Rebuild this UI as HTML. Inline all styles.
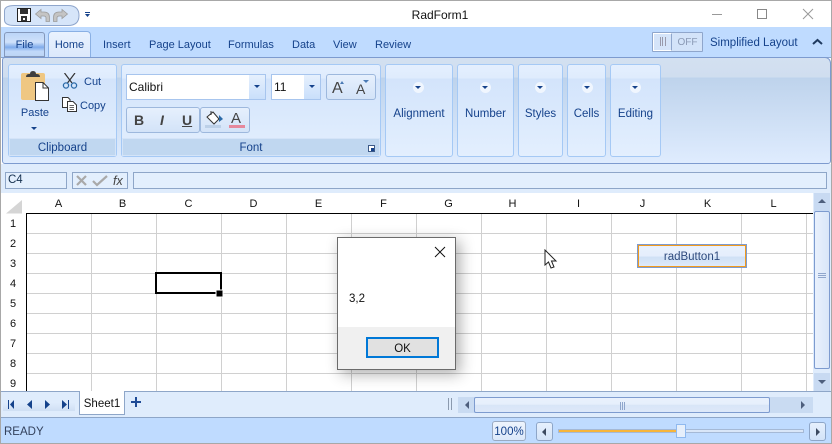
<!DOCTYPE html>
<html><head><meta charset="utf-8"><style>
html,body{margin:0;padding:0;background:#fff}
#r{position:relative;width:832px;height:444px;overflow:hidden;background:#fff;font-family:"Liberation Sans",sans-serif;font-size:11.5px;color:#15428b}
#r div{position:absolute;box-sizing:border-box;white-space:nowrap}
.t{line-height:14px}
.c{text-align:center}
.k{color:#111}
.s{font-size:11px}
.grp{border:1px solid #a5c9f5;border-radius:3px;background:linear-gradient(#e4effe 0,#dfecfd 13px,#d3e4fb 14px,#e3effe 100%)}
.gl{background:#c0d7f0;border:1px solid #d4e4f8;color:#15428b;text-align:center;line-height:18px}
.btn{border:1px solid #8fa9d0;border-radius:3px;background:linear-gradient(#e6f0fd,#d3e3f8)}
.ar{width:0;height:0;border-left:3px solid transparent;border-right:3px solid transparent;border-top:3px solid #15428b}
.dot{width:11px;height:11px;border-radius:50%;background:#f0f6fe}
</style></head><body><div id="r">
<!-- window -->
<div style="left:0;top:0;width:832px;height:1px;background:#a8a8a8"></div>
<div style="left:0;top:27px;width:832px;height:30px;background:#bfdbff"></div>
<div style="left:1px;top:57px;width:830px;height:1px;background:#8aa5cf"></div>

<!-- QAT -->
<svg style="position:absolute;left:0;top:0" width="110" height="30">
<path d="M14.5 5.500H68Q79 5.500 79 15.500T68 25.500H14.500Q4.500 25.500 4.500 20V11Q4.500 5.500 14.500 5.500Z" fill="#d6e5f9" stroke="#8fa6cc"/>
<rect x="17.500" y="8.500" width="13" height="13" fill="#fff" stroke="#222"/>
<rect x="20" y="9" width="8" height="5" fill="#333"/><rect x="21" y="16" width="6" height="5" fill="#333"/><rect x="23" y="18" width="2" height="2" fill="#fff"/>
<path d="M35.500 14L41 9.500V12H44Q49.500 12 49.500 17.500V21.500H46V18Q46 16 43.500 16H41V18.500Z" fill="#c4c4c4" stroke="#9c9c9c" stroke-width=".8"/>
<path d="M67.500 14L62 9.500V12H59Q53.500 12 53.500 17.500V21.500H57V18Q57 16 59.500 16H62V18.500Z" fill="#c4c4c4" stroke="#9c9c9c" stroke-width=".8"/>
<rect x="85" y="12" width="5" height="1" fill="#15428b"/><path d="M85 14H90L87.500 17Z" fill="#15428b"/>
</svg>
<div class="t c k" style="left:380px;top:8px;width:120px;font-size:12px">RadForm1</div>
<svg style="position:absolute;left:700px;top:0" width="132" height="27" fill="none">
<path d="M12 14.500H22" stroke="#999"/><rect x="57.500" y="9.500" width="9" height="9" stroke="#888"/><path d="M103 9L113 19M113 9L103 19" stroke="#999"/>
</svg>

<!-- tabs -->
<div style="left:4px;top:32px;width:41px;height:25px;border:1px solid #8498bb;border-radius:3px 3px 0 0;background:linear-gradient(#bcd5f7 0,#cfe1fa 40%,#7fabeb 62%,#c2d9f9 80%,#bcd5f5)"></div>
<div class="t c s" style="left:4px;top:38px;width:41px">File</div>
<div style="left:48px;top:31px;width:43px;height:27px;border:1px solid #8ab0e4;border-bottom:0;border-radius:4px 4px 0 0;background:linear-gradient(#e9f2fe,#dbe8fb)"></div>
<div class="t c s" style="left:48px;top:38px;width:43px">Home</div>
<div class="t s" style="left:103px;top:38px">Insert</div>
<div class="t s" style="left:149px;top:38px">Page Layout</div>
<div class="t s" style="left:228px;top:38px">Formulas</div>
<div class="t s" style="left:292px;top:38px">Data</div>
<div class="t s" style="left:333px;top:38px">View</div>
<div class="t s" style="left:375px;top:38px">Review</div>

<!-- toggle -->
<div style="left:652px;top:32px;width:51px;height:20px;border:1px solid #8fa6cc;background:#d3e3f9;border-radius:1px"></div>
<div style="left:653px;top:33px;width:19px;height:18px;border:1px solid #fff;background:#d5e4f9;border-right:1px solid #8fa6cc"></div>
<div style="left:660px;top:37px;width:6px;height:9px;border-left:1px solid #99a;border-right:1px solid #99a"></div>
<div style="left:662px;top:37px;width:1px;height:9px;background:#99a"></div>
<div class="t c" style="left:672px;top:36px;width:31px;font-size:10px;color:#8b9ab5">OFF</div>
<div class="t" style="left:710px;top:36px;font-size:11.500px">Simplified Layout</div>
<svg style="position:absolute;left:811px;top:38px" width="14" height="10" fill="none"><path d="M2 6L6.500 2L11 6" stroke="#1f3a5f" stroke-width="2"/></svg>

<!-- ribbon body -->
<div style="left:2px;top:57px;width:829px;height:107px;border:1px solid #7d9bcf;border-top:1px solid #7d9bcf;border-radius:3px 6px 3px 3px;background:linear-gradient(#d3e0f1 0,#d0deef 19px,#bed3ec 20px,#dfecfe 100%)"></div>

<!-- Clipboard -->
<div class="grp" style="left:8px;top:64px;width:109px;height:93px"></div>
<div class="gl" style="left:9px;top:138px;width:107px;height:18px">Clipboard</div>
<svg style="position:absolute;left:20px;top:70px" width="32" height="33">
<rect x="1" y="3" width="24" height="27" rx="2" fill="#efc782"/>
<path d="M6 7Q6 4 9 4H10Q10 1 13 1T16 4H17Q20 4 20 7Z" fill="#3f3f3f"/>
<path d="M15.500 12.500H23L28.500 18V30.500H15.500Z" fill="#fff" stroke="#333"/><path d="M23 12.500V18H28.500" fill="none" stroke="#333"/>
</svg>
<div class="t c s" style="left:19px;top:106px;width:32px">Paste</div>
<div class="ar" style="left:31px;top:127px"></div>
<svg style="position:absolute;left:62px;top:73px" width="16" height="17" fill="none" stroke="#333">
<path d="M2.500 0L10 10M13 0L5.500 10" stroke-width="1.200"/><circle cx="4" cy="12.500" r="2.600" stroke="#2b6aa8" stroke-width="1.300"/><circle cx="12" cy="12.500" r="2.600" stroke="#2b6aa8" stroke-width="1.300"/>
</svg>
<div class="t s" style="left:84px;top:75px">Cut</div>
<svg style="position:absolute;left:61px;top:97px" width="17" height="15" fill="#fff" stroke="#333">
<path d="M1.500 .500H7L9 2.500V10.500H1.500Z"/><path d="M6.500 4.500H12L15.500 8V14.500H6.500Z"/><path d="M8.500 8.500H13M8.500 10.500H13M8.500 12.500H13" stroke-width=".8"/>
</svg>
<div class="t s" style="left:80px;top:99px">Copy</div>

<!-- Font -->
<div class="grp" style="left:121px;top:64px;width:260px;height:93px"></div>
<div class="gl" style="left:122px;top:138px;width:258px;height:18px"><span>Font</span></div>
<div style="left:368px;top:145px;width:7px;height:7px;border:1px solid #3d5a88;background:#fff"></div>
<div style="left:371px;top:148px;width:3px;height:3px;background:#15428b"></div>
<div style="left:126px;top:74px;width:140px;height:26px;background:#fff;border:1px solid #a7c5ee"></div>
<div class="t k" style="left:129px;top:80px;font-size:12px">Calibri</div>
<div style="left:249px;top:75px;width:16px;height:24px;background:linear-gradient(#e6f0fd,#c9dffb)"></div>
<div class="ar" style="left:254px;top:85px"></div>
<div style="left:271px;top:74px;width:50px;height:26px;background:#fff;border:1px solid #a7c5ee"></div>
<div class="t k" style="left:274px;top:80px;font-size:12px">11</div>
<div style="left:304px;top:75px;width:16px;height:24px;background:linear-gradient(#e6f0fd,#c9dffb)"></div>
<div class="ar" style="left:309px;top:85px"></div>
<div class="btn" style="left:326px;top:74px;width:50px;height:26px;border-color:#9db8dd"></div>
<div class="t" style="left:332px;top:80px;font-size:16px;line-height:18px;color:#444">A</div>
<div style="left:340px;top:81px;width:0;height:0;border-left:2.500px solid transparent;border-right:2.500px solid transparent;border-bottom:3px solid #4a7ab5"></div>
<div class="t" style="left:356px;top:81px;font-size:14px;line-height:16px;color:#444">A</div>
<div style="left:363px;top:80px;width:0;height:0;border-left:3px solid transparent;border-right:3px solid transparent;border-top:3px solid #4a7ab5"></div>

<div class="btn" style="left:126px;top:107px;width:74px;height:26px;border-color:#9db8dd"></div>
<div class="btn" style="left:200px;top:107px;width:50px;height:26px;border-color:#9db8dd"></div>
<div class="t" style="left:134px;top:113px;font-size:14px;font-weight:bold;color:#444">B</div>
<div class="t" style="left:160px;top:113px;font-size:14px;font-weight:bold;font-style:italic;color:#444">I</div>
<div class="t" style="left:182px;top:113px;font-size:14px;font-weight:bold;text-decoration:underline;color:#444">U</div>
<svg style="position:absolute;left:205px;top:110px" width="18" height="18">
<path d="M2 7L8 2L14 9L9 14Z" fill="#fff" stroke="#333"/><path d="M14 5L18 9L14 12Z" fill="#2b6aa8"/><path d="M6 1V5" stroke="#333"/>
<rect x="0" y="15" width="16" height="3" fill="#bcd0e8"/>
</svg>
<div class="t" style="left:231px;top:112px;font-size:15px;color:#444">A</div>
<div style="left:229px;top:125px;width:16px;height:3px;background:#e6889c"></div>

<!-- collapsed groups -->
<div class="grp" style="left:385px;top:64px;width:68px;height:93px"></div>
<div class="grp" style="left:457px;top:64px;width:57px;height:93px"></div>
<div class="grp" style="left:518px;top:64px;width:45px;height:93px"></div>
<div class="grp" style="left:567px;top:64px;width:39px;height:93px"></div>
<div class="grp" style="left:610px;top:64px;width:51px;height:93px"></div>
<div class="dot" style="left:413px;top:82px"></div>
<div class="dot" style="left:480px;top:82px"></div>
<div class="dot" style="left:535px;top:82px"></div>
<div class="dot" style="left:582px;top:82px"></div>
<div class="dot" style="left:630px;top:82px"></div>
<div class="ar" style="left:415px;top:86px"></div>
<div class="ar" style="left:482px;top:86px"></div>
<div class="ar" style="left:537px;top:86px"></div>
<div class="ar" style="left:584px;top:86px"></div>
<div class="ar" style="left:632px;top:86px"></div>
<div class="t c" style="left:385px;top:107px;width:68px">Alignment</div>
<div class="t c" style="left:457px;top:107px;width:57px">Number</div>
<div class="t c" style="left:518px;top:107px;width:45px">Styles</div>
<div class="t c" style="left:567px;top:107px;width:39px">Cells</div>
<div class="t c" style="left:610px;top:107px;width:51px">Editing</div>

<!-- formula bar -->
<div style="left:0;top:164px;width:832px;height:29px;background:#dfecfc"></div>
<div style="left:5px;top:172px;width:62px;height:17px;border:1px solid #8ea6c8;background:#e3effd;color:#15304f;padding-left:2px;line-height:14px;font-size:11.500px">C4</div>
<div style="left:72px;top:172px;width:56px;height:17px;border:1px solid #8ea6c8;background:#e3effd"></div>
<svg style="position:absolute;left:76px;top:174px" width="50" height="14" fill="none" stroke="#a9a9a9" stroke-width="2.200">
<path d="M1 2L10 11M10 2L1 11"/><path d="M17 7L21 11L31 2"/></svg>
<div class="t" style="left:113px;top:174px;font-size:12.500px;font-style:italic;color:#444">fx</div>
<div style="left:133px;top:172px;width:694px;height:17px;border:1px solid #8ea6c8;background:#e3effd"></div>

<!-- sheet -->
<svg style="position:absolute;left:0;top:193px" width="832" height="198">
<path d="M6 20.500L22 7V20.500Z" fill="#d5d5d5"/>
<g stroke="#d0d0d0">
<path d="M91.500 20V198M156.500 20V198M221.500 20V198M286.500 20V198M351.500 20V198M416.500 20V198M481.500 20V198M546.500 20V198M611.500 20V198M676.500 20V198M741.500 20V198M806.500 20V198"/>
<path d="M27 40.500H813M27 60.500H813M27 80.500H813M27 100.500H813M27 120.500H813M27 140.500H813M27 160.500H813M27 180.500H813"/>
</g>
<path d="M813 20.500H26.500V198" fill="none" stroke="#000"/>
<rect x="156" y="80" width="65" height="20" fill="#fff" stroke="#000" stroke-width="2"/>
<rect x="216" y="97" width="7" height="7" fill="#000" stroke="#fff"/>
</svg>
<div class="t c k" style="left:26px;top:197px;width:65px;font-size:11px">A</div>
<div class="t c k" style="left:90px;top:197px;width:65px;font-size:11px">B</div>
<div class="t c k" style="left:156px;top:197px;width:65px;font-size:11px">C</div>
<div class="t c k" style="left:221px;top:197px;width:65px;font-size:11px">D</div>
<div class="t c k" style="left:286px;top:197px;width:65px;font-size:11px">E</div>
<div class="t c k" style="left:351px;top:197px;width:65px;font-size:11px">F</div>
<div class="t c k" style="left:416px;top:197px;width:65px;font-size:11px">G</div>
<div class="t c k" style="left:480px;top:197px;width:65px;font-size:11px">H</div>
<div class="t c k" style="left:546px;top:197px;width:65px;font-size:11px">I</div>
<div class="t c k" style="left:610px;top:197px;width:65px;font-size:11px">J</div>
<div class="t c k" style="left:675px;top:197px;width:65px;font-size:11px">K</div>
<div class="t c k" style="left:741px;top:197px;width:65px;font-size:11px">L</div>
<div class="t c k" style="left:3px;top:217px;width:20px;font-size:11px">1</div>
<div class="t c k" style="left:3px;top:237px;width:20px;font-size:11px">2</div>
<div class="t c k" style="left:3px;top:257px;width:20px;font-size:11px">3</div>
<div class="t c k" style="left:3px;top:277px;width:20px;font-size:11px">4</div>
<div class="t c k" style="left:3px;top:297px;width:20px;font-size:11px">5</div>
<div class="t c k" style="left:3px;top:317px;width:20px;font-size:11px">6</div>
<div class="t c k" style="left:3px;top:337px;width:20px;font-size:11px">7</div>
<div class="t c k" style="left:3px;top:357px;width:20px;font-size:11px">8</div>
<div class="t c k" style="left:3px;top:377px;width:20px;font-size:11px">9</div>

<!-- radButton -->
<div style="left:637px;top:244px;width:110px;height:24px;border:1px solid #7d9bcf;background:linear-gradient(#e9f1fd 0,#e5eefc 50%,#cfe0f5 55%,#e0ebfa 100%);box-shadow:inset 0 0 0 1px #f29b1d"></div>
<div class="t c" style="left:637px;top:250px;width:110px;font-size:11.500px;color:#2e4a7d">radButton1</div>

<!-- cursor -->
<svg style="position:absolute;left:544px;top:249px" width="14" height="22"><path d="M1 1V16L4.500 13L7 19L10 18L7.500 12H12Z" fill="#fff" stroke="#222"/></svg>

<!-- scrollbar vert -->
<div style="left:813px;top:193px;width:18px;height:198px;background:#dfecfc"></div>
<div style="left:814px;top:193px;width:16px;height:18px;background:#c8daf2"></div>
<div style="left:818px;top:199px;width:0;height:0;border-left:4px solid transparent;border-right:4px solid transparent;border-bottom:4px solid #4e5f7d"></div>
<div style="left:814px;top:211px;width:16px;height:158px;border:1px solid #7d9bcf;border-radius:2px;background:linear-gradient(90deg,#e9f1fd,#d9e6f8)"></div>
<div style="left:818px;top:273px;width:8px;height:5px;border-top:1px solid #8fa6cc;border-bottom:1px solid #8fa6cc"></div>
<div style="left:818px;top:275px;width:8px;height:1px;background:#8fa6cc"></div>
<div style="left:814px;top:373px;width:16px;height:18px;background:#c8daf2"></div>
<div style="left:818px;top:380px;width:0;height:0;border-left:4px solid transparent;border-right:4px solid transparent;border-top:4px solid #4e5f7d"></div>

<!-- dialog -->
<div style="left:337px;top:237px;width:119px;height:133px;background:#fff;border:1px solid #6b6b6b;box-shadow:4px 4px 14px rgba(0,0,0,.32)"></div>
<div style="left:338px;top:327px;width:117px;height:42px;background:#f0f0f0"></div>
<svg style="position:absolute;left:434px;top:246px" width="12" height="12" fill="none" stroke="#111"><path d="M1 1L11 11M11 1L1 11"/></svg>
<div class="t k" style="left:349px;top:292px;font-size:11.500px">3,2</div>
<div style="left:366px;top:337px;width:73px;height:21px;border:2px solid #0078d7;background:#e1e1e1"></div>
<div class="t c k" style="left:366px;top:342px;width:73px;font-size:11.500px">OK</div>

<!-- sheet tabs row -->
<div style="left:0;top:391px;width:832px;height:26px;background:#dfecfc;border-top:1px solid #8ea6c8"></div>
<div style="left:3px;top:397px;width:72px;height:14px;background:linear-gradient(#dfecfc 40%,#cfdff4)"></div>
<svg style="position:absolute;left:6px;top:400px" width="66" height="10" fill="#15428b">
<path d="M2 0H3V9H2ZM8 0V9L4 4.500Z"/><path d="M26 0V9L21 4.500Z"/><path d="M39 0V9L44 4.500Z"/><path d="M56 0V9L61 4.500ZM62 0H63V9H62Z"/></svg>
<div style="left:79px;top:391px;width:46px;height:24px;background:#fff;border:1px solid #8ea6c8;border-top:0"></div>
<div class="t c k" style="left:79px;top:397px;width:46px;font-size:11.500px">Sheet1</div>
<div style="left:131px;top:401px;width:10px;height:2px;background:#1f4b96"></div>
<div style="left:135px;top:397px;width:2px;height:10px;background:#1f4b96"></div>

<!-- hscroll -->
<div style="left:448px;top:398px;width:4px;height:12px;border-left:1px solid #8b9aae;border-right:1px solid #8b9aae"></div>
<div style="left:458px;top:397px;width:355px;height:16px;background:#c9dbf2"></div>
<div style="left:465px;top:401px;width:0;height:0;border-top:4px solid transparent;border-bottom:4px solid transparent;border-right:4px solid #4e5f7d"></div>
<div style="left:801px;top:401px;width:0;height:0;border-top:4px solid transparent;border-bottom:4px solid transparent;border-left:4px solid #4e5f7d"></div>
<div style="left:474px;top:397px;width:296px;height:16px;border:1px solid #7d9bcf;border-radius:2px;background:linear-gradient(#e9f1fd 0,#e6effc 45%,#d8e5f7 50%,#dde8f9)"></div>
<div style="left:620px;top:402px;width:5px;height:8px;border-left:1px solid #8fa6cc;border-right:1px solid #8fa6cc"></div>
<div style="left:622px;top:402px;width:1px;height:8px;background:#8fa6cc"></div>

<!-- status -->
<div style="left:0;top:417px;width:832px;height:26px;background:#bfdbff;border-top:1px solid #8ea6c8"></div>
<div style="left:0;top:443px;width:832px;height:1px;background:#a8a8a8"></div>
<div class="t" style="left:4px;top:425px;font-size:11.500px;color:#33415c">READY</div>
<div class="btn" style="left:492px;top:421px;width:34px;height:20px;border-color:#9aaac2;background:linear-gradient(#eef4fd,#dbe8fa)"></div>
<div class="t c" style="left:492px;top:425px;width:34px;font-size:11.500px;color:#15428b">100%</div>
<div class="btn" style="left:536px;top:422px;width:17px;height:19px;border-color:#8ea6c8"></div>
<div style="left:542px;top:428px;width:0;height:0;border-top:4px solid transparent;border-bottom:4px solid transparent;border-right:4px solid #3d4a60"></div>
<div style="left:558px;top:429px;width:246px;height:4px;background:#d9e6f8;border:1px solid #a5b9d6"></div>
<div style="left:559px;top:430px;width:120px;height:2px;background:#f7b53a"></div>
<div style="left:676px;top:424px;width:10px;height:14px;border:1px solid #8fb9ef;background:#e6effb"></div>
<div class="btn" style="left:809px;top:422px;width:17px;height:19px;border-color:#8ea6c8"></div>
<div style="left:816px;top:428px;width:0;height:0;border-top:4px solid transparent;border-bottom:4px solid transparent;border-left:4px solid #3d4a60"></div>

<div style="left:0;top:0;width:1px;height:444px;background:#a8a8a8"></div>
<div style="left:831px;top:0;width:1px;height:444px;background:#a8a8a8"></div>
</div></body></html>
